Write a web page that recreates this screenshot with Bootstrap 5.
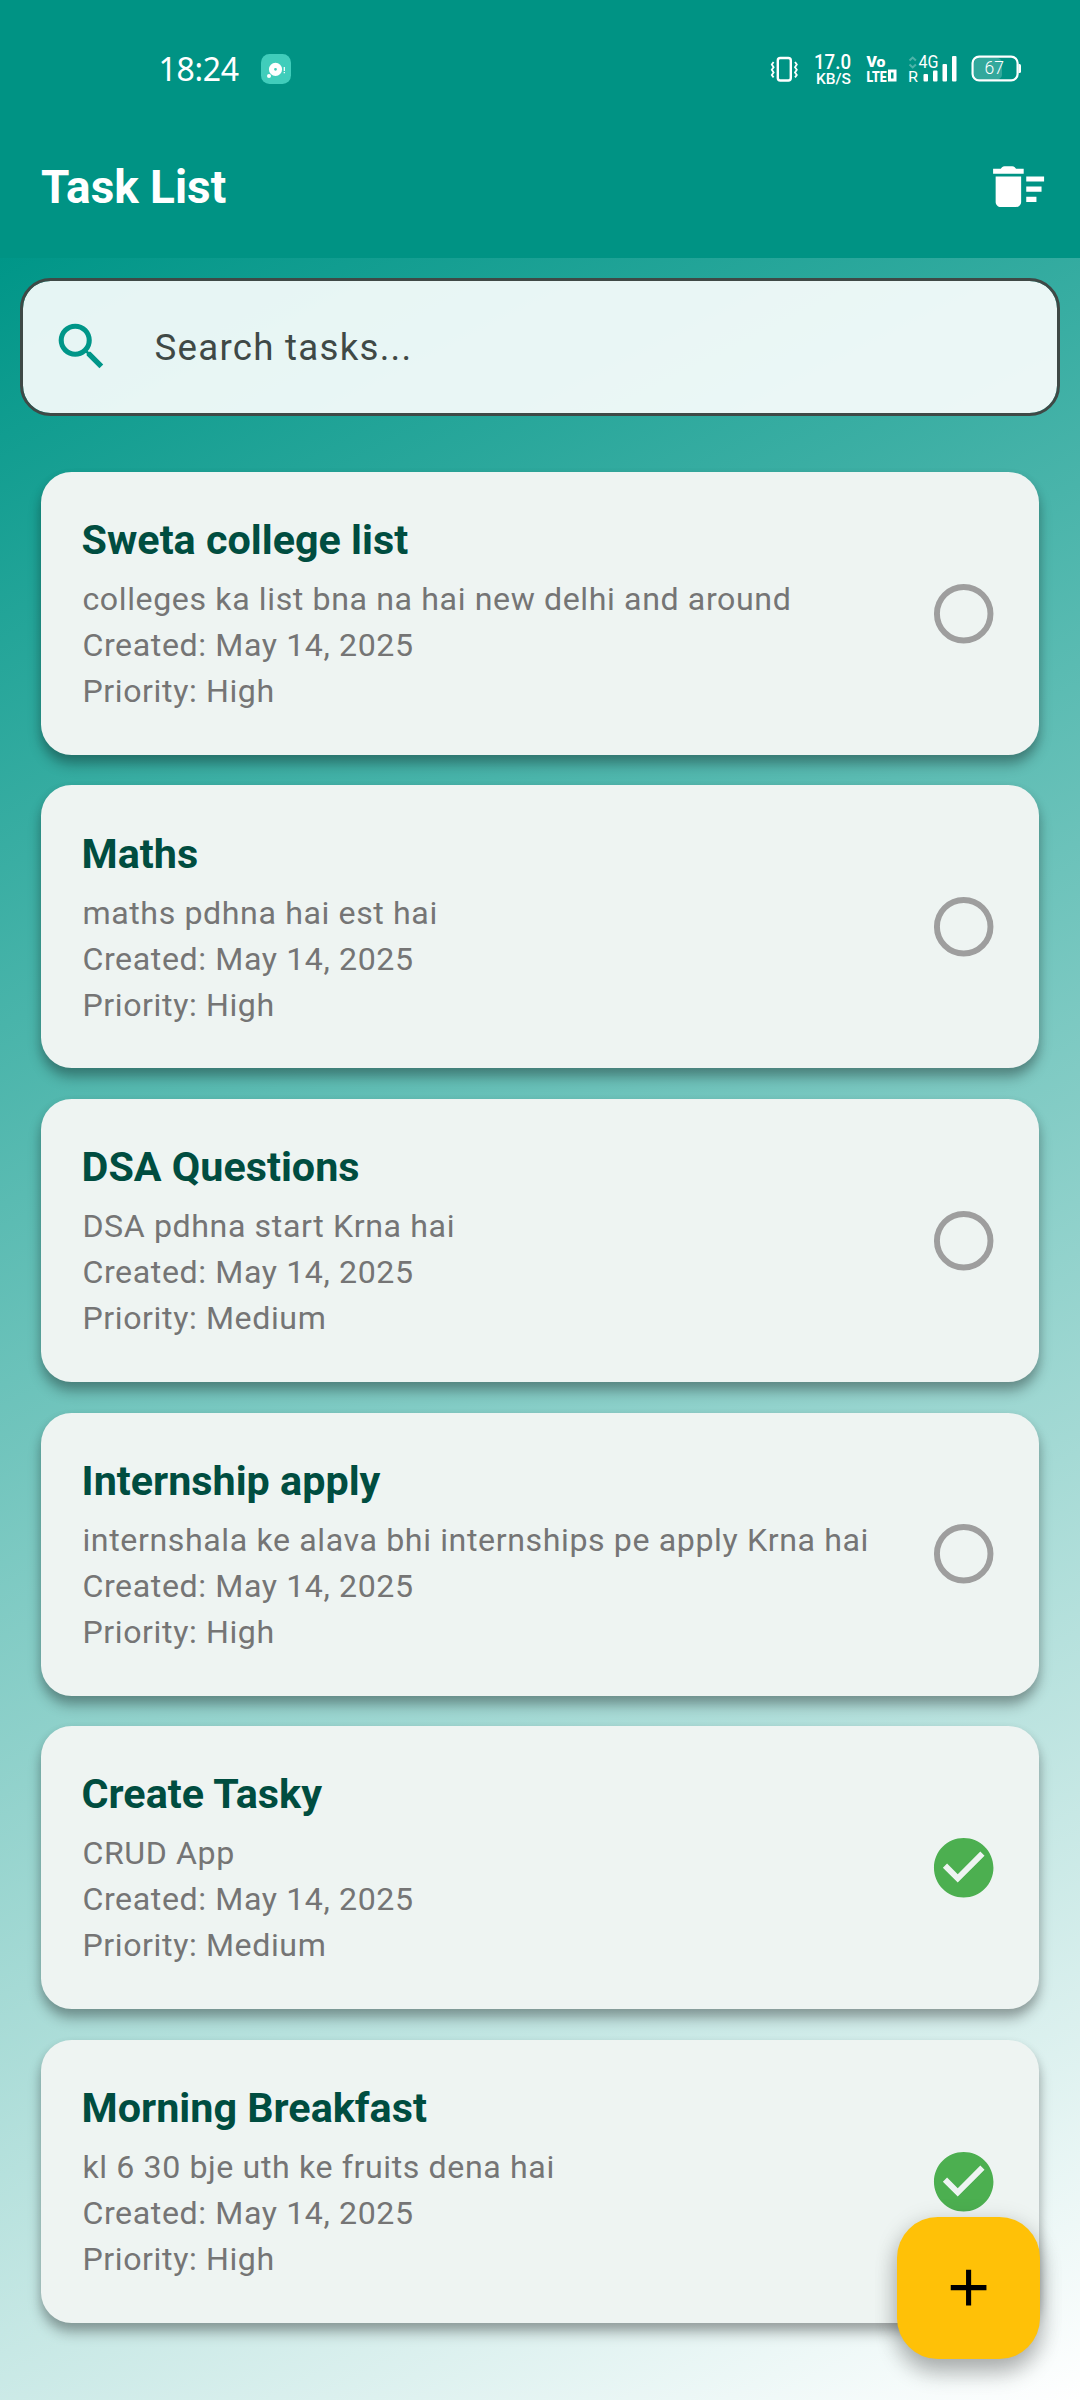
<!DOCTYPE html>
<html lang="en">
<head>
<meta charset="utf-8">
<meta name="viewport" content="width=device-width, initial-scale=1">
<title>Task List</title>
<link href="https://cdn.jsdelivr.net/npm/bootstrap@5.3.0/dist/css/bootstrap.min.css" rel="stylesheet">
<style>
body{font-family:Roboto,sans-serif;background:#009384;width:1080px;height:2400px;overflow:hidden}
.statusbar{height:115px;padding:0 55px 0 158.500px}
.clock{font-family:"Noto Sans",sans-serif;font-size:32px;line-height:40px;letter-spacing:-.3px;color:#fff;width:102.500px;padding-top:22px}
.toolbar{height:142.6px;padding:0 30.7px 0 41px}
.toolbar h1{font-size:45.9px;line-height:58px;font-weight:700;letter-spacing:0;padding-top:1px}
.backdrop{height:2142.4px;background:linear-gradient(153.24deg,#009688,#fff);padding:20.4px}
.search-box{height:137.8px;border:3px solid #3f4946;border-radius:30.6px;background:rgba(255,255,255,.9);background-clip:padding-box;padding:0 27.9px}
.search-box input{background:none;border:0;outline:0;padding:2px 0 0;margin-left:42px;font-size:36.7px;letter-spacing:1.25px;color:#3f4946;width:800px}
.search-box input::placeholder{color:#3f4946;opacity:1}
.tasks{padding:56.1px 20.4px 0;gap:30.6px}
.task{height:283px;border-radius:30.6px;background:#eef4f2;border:0;padding:40.8px 40.2px 40.8px 40.8px;box-shadow:0 10px 13px rgba(0,0,0,.27),0 4px 10px rgba(0,0,0,.12)}
.task h2{font-size:41.3px;line-height:55px;font-weight:700;color:#004d40;margin:0 0 8.2px}
.task p{font-size:32.13px;line-height:45.9px;letter-spacing:.61px;color:#757575;margin:0;position:relative;top:1px;padding-left:.8px}
.fab{right:40.4px;bottom:40.6px;width:142.8px;height:142.8px;border-radius:40.8px;background:#ffc107;border:0;box-shadow:0 14px 22px rgba(0,0,0,.24),0 4px 24px rgba(0,0,0,.14)}
</style>
<script src="https://cdn.jsdelivr.net/npm/bootstrap@5.3.0/dist/js/bootstrap.bundle.min.js"></script>
</head>
<body class="position-relative">
<svg class="d-none">
<symbol id="open" viewBox="0 0 24 24"><circle cx="12" cy="12" r="9" fill="none" stroke="#9e9e9e" stroke-width="2"/></symbol>
<symbol id="done" viewBox="0 0 24 24"><path fill="#4caf50" d="M12 2C6.48 2 2 6.48 2 12s4.48 10 10 10 10-4.48 10-10S17.52 2 12 2zm-2 15-5-5 1.41-1.41L10 14.17l7.59-7.59L19 8l-9 9z"/></symbol>
</svg>
<header>
<div class="statusbar d-flex align-items-center">
<div class="clock">18:24</div>
<svg width="30" height="30" viewBox="0 0 30 30" style="margin-top:23px"><rect width="30" height="30" rx="8.5" fill="#40cdbb"/><circle cx="14.5" cy="15.3" r="4" fill="none" stroke="#fff" stroke-width="5.2"/><circle cx="8" cy="22" r="2" fill="#fff"/><path d="M23.3 13v4M23.3 18v1.3" stroke="#fff" stroke-width="1.2"/></svg>
<svg class="ms-auto" width="260" height="40" viewBox="765 50 260 40" fill="#fff" style="margin-top:25px">
<rect x="777.8" y="58" width="13" height="22.5" rx="2.5" fill="none" stroke="#fff" stroke-width="2.4"/>
<path d="M773.6 62l-1.8 2.6 1.8 2.6-1.8 2.6 1.8 2.6-1.8 2.6 1.8 2.4M795 62l1.8 2.6-1.8 2.6 1.8 2.6-1.8 2.6 1.8 2.6-1.8 2.4" fill="none" stroke="#fff" stroke-width="1.8"/>
<g font-family="Roboto, sans-serif">
<text x="814" y="68.500" font-size="19.500" font-weight="500" textLength="37" lengthAdjust="spacingAndGlyphs">17.0</text>
<text x="816" y="83.500" font-size="15" font-weight="500" textLength="35" lengthAdjust="spacingAndGlyphs">KB/S</text>
<text x="866.5" y="67" font-size="14.500" font-weight="900" textLength="19" lengthAdjust="spacingAndGlyphs">Vo</text>
<text x="866.5" y="81.5" font-size="14.500" font-weight="900" textLength="20" lengthAdjust="spacingAndGlyphs">LTE</text>
<path d="M888 69.5h8.5v12H888zm3 3v6h2.5v-6z" fill-rule="evenodd"/>
<text x="918.5" y="68.3" font-size="17.5" textLength="20" lengthAdjust="spacingAndGlyphs">4G</text>
<text x="908" y="82" font-size="15.5" textLength="10" lengthAdjust="spacingAndGlyphs">R</text>
<text x="984.5" y="74" font-size="18" font-weight="300" textLength="19.5" lengthAdjust="spacingAndGlyphs">67</text>
</g>
<path d="M909.5 60.5l3.2-3 3.2 3M909.5 64.5l3.2 3 3.2-3" fill="none" stroke="#fff" stroke-opacity=".3" stroke-width="2"/>
<rect x="923.5" y="74" width="4.5" height="7.5" rx="1"/><rect x="933" y="70.5" width="4.5" height="11" rx="1"/><rect x="942.5" y="64" width="4.5" height="17.5" rx="1"/><rect x="952" y="56" width="4.5" height="25.5" rx="1"/>
<rect x="974" y="58" width="28" height="21.5" rx="5" fill-opacity=".2"/>
<rect x="972.6" y="56.6" width="45" height="23.8" rx="6.5" fill="none" stroke="#fff" stroke-width="2.2"/>
<path d="M1018.5 64h1q1.5 0 1.5 1.5v6q0 1.5-1.5 1.5h-1z"/>
</svg>
</div>
<nav class="toolbar d-flex align-items-center justify-content-between">
<h1 class="text-white m-0">Task List</h1>
<svg width="61.2" height="61.2" viewBox="0 0 24 24" fill="#fff"><path d="M15 16h4v2h-4zM15 8h7v2h-7zM15 12h6v2h-6zM3 18c0 1.1.9 2 2 2h6c1.1 0 2-.9 2-2V8H3zM14 5h-3l-.5-.55Q10.1 4 9.5 4h-3Q5.900 4 5.500 4.450L5 5H2v2h12z"/></svg>
</nav>
</header>
<main class="backdrop">
<div class="search-box d-flex align-items-center">
<svg width="61.2" height="61.2" viewBox="0 0 24 24" fill="#009688"><path d="M15.500 14h-.79l-.28-.27A6.471 6.471 0 0 0 16 9.500 6.500 6.500 0 1 0 9.500 16c1.610 0 3.090-.59 4.230-1.570l.27.28v.79l5 4.990L20.490 19zM9.500 14a4.500 4.500 0 1 1 0-9 4.500 4.500 0 0 1 0 9z"/></svg>
<input type="text" placeholder="Search tasks...">
</div>
<section class="tasks d-flex flex-column">
<article class="task card flex-row align-items-center justify-content-between"><div><h2>Sweta college list</h2><p>colleges ka list bna na hai new delhi and around</p><p>Created: May 14, 2025</p><p>Priority: High</p></div><svg width="71.4" height="71.4"><use href="#open"/></svg></article>
<article class="task card flex-row align-items-center justify-content-between"><div><h2>Maths</h2><p>maths pdhna hai est hai</p><p>Created: May 14, 2025</p><p>Priority: High</p></div><svg width="71.4" height="71.4"><use href="#open"/></svg></article>
<article class="task card flex-row align-items-center justify-content-between"><div><h2>DSA Questions</h2><p>DSA pdhna start Krna hai</p><p>Created: May 14, 2025</p><p>Priority: Medium</p></div><svg width="71.4" height="71.4"><use href="#open"/></svg></article>
<article class="task card flex-row align-items-center justify-content-between"><div><h2>Internship apply</h2><p>internshala ke alava bhi internships pe apply Krna hai</p><p>Created: May 14, 2025</p><p>Priority: High</p></div><svg width="71.4" height="71.4"><use href="#open"/></svg></article>
<article class="task card flex-row align-items-center justify-content-between"><div><h2>Create Tasky</h2><p>CRUD App</p><p>Created: May 14, 2025</p><p>Priority: Medium</p></div><svg width="71.4" height="71.4"><use href="#done"/></svg></article>
<article class="task card flex-row align-items-center justify-content-between"><div><h2>Morning Breakfast</h2><p>kl 6 30 bje uth ke fruits dena hai</p><p>Created: May 14, 2025</p><p>Priority: High</p></div><svg width="71.4" height="71.4"><use href="#done"/></svg></article>
</section>
</main>
<button class="fab position-absolute d-flex align-items-center justify-content-center p-0" type="button" aria-label="Add task"><svg width="61.2" height="61.2" viewBox="0 0 24 24"><path d="M19 13h-6v6h-2v-6H5v-2h6V5h2v6h6z"/></svg></button>
</body>
</html>
